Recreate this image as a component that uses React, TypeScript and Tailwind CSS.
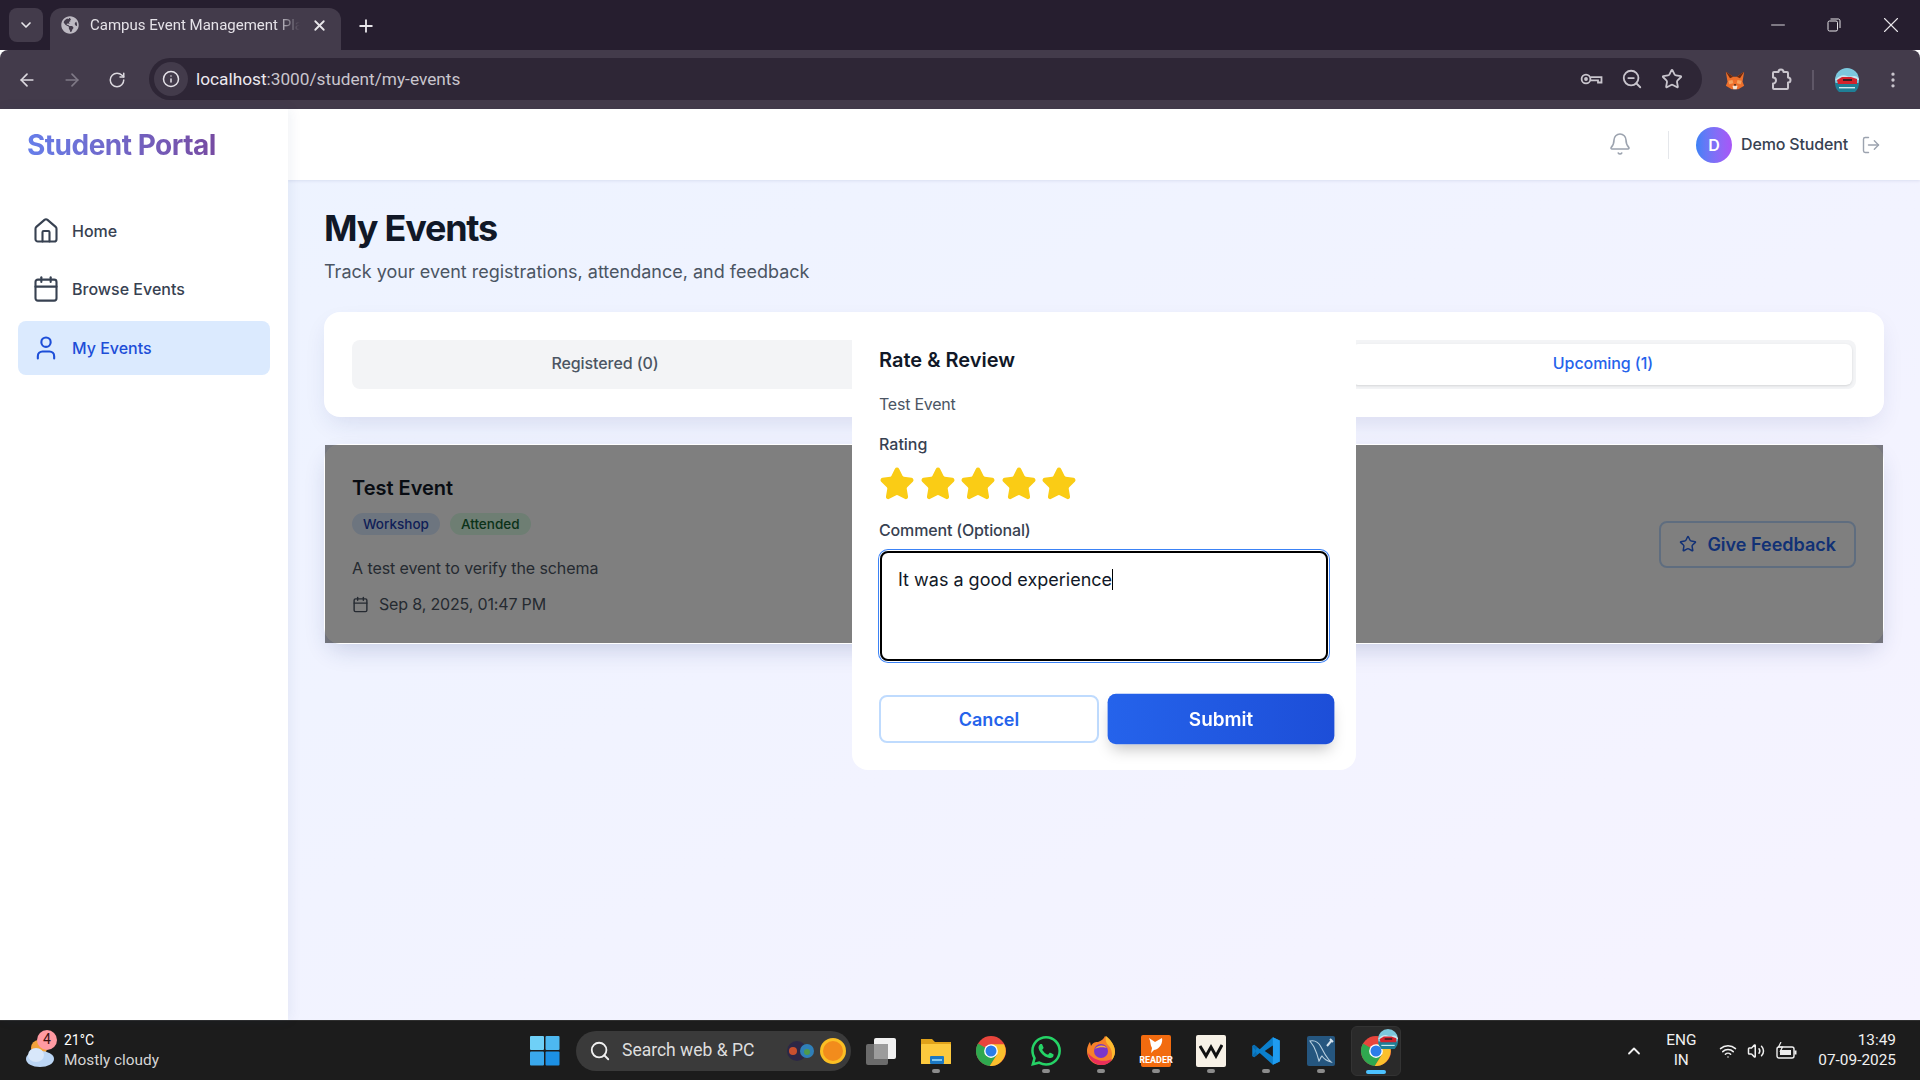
import React from "react";
import { ArrowLeft, ArrowRight, RotateCw, Info, ZoomOut, Star, EllipsisVertical, ChevronDown, Plus, X, Minus, House, Calendar, User, Bell, LogOut, Search, ChevronUp, Wifi, Volume2 } from "lucide-react";
import { FaGlobeAmericas } from "react-icons/fa";
import { SiWhatsapp } from "react-icons/si";

const segoe = "font-['Roboto','Noto_Sans',sans-serif]";

function KeyIcon() {
  return (
    <svg width="24" height="24" viewBox="0 0 24 24" fill="none" stroke="#c9c5cd" strokeWidth="1.8">
      <circle cx="7" cy="12" r="4.4" />
      <circle cx="7" cy="12" r="1" fill="#c9c5cd" />
      <path d="M11.4 10.2H22.5V15.5H19V13.4H11.2" />
    </svg>
  );
}

function PuzzleIcon() {
  return (
    <svg width="24" height="24" viewBox="0 0 24 24" fill="none" stroke="#c9c5cd" strokeWidth="2" strokeLinejoin="round">
      <path d="M5 4H9.5A2.5 2.5 0 0 1 14.5 4H18A1 1 0 0 1 19 5V9.5A2.5 2.5 0 0 1 19 14.5V20A1 1 0 0 1 18 21H5A1 1 0 0 1 4 20V15.5A3 3 0 0 0 4 9.5V5A1 1 0 0 1 5 4Z" />
    </svg>
  );
}

function Restore() {
  return (
    <svg width="14" height="14" viewBox="0 0 14 14" fill="none" stroke="#e8e6ea" strokeWidth="1">
      <rect x="1" y="3" width="9.5" height="10" rx="1.5" />
      <path d="M3.5 1H11.5A1.8 1.8 0 0 1 13 2.8V10" />
    </svg>
  );
}

function Fox() {
  return (
    <svg width="20" height="20" viewBox="0 0 24 24">
      <polygon points="1,2 10,8 14,8 23,2 21,14 23,19 16,23 8,23 1,19 3,14" fill="#ee6f2b" />
      <polygon points="1,2 10,8 6,10" fill="#6b2a10" />
      <polygon points="23,2 14,8 18,10" fill="#6b2a10" />
      <polygon points="4,13 9,12 10,16 5,17" fill="#f6a05c" />
      <polygon points="20,13 15,12 14,16 19,17" fill="#f6a05c" />
      <polygon points="9,19 15,19 14,23 10,23" fill="#f4e4d3" />
      <polygon points="10.5,17 13.5,17 12,19.5" fill="#2f2118" />
    </svg>
  );
}

function Avatar({ size }: { size: number }) {
  return (
    <svg width={size} height={size} viewBox="0 0 24 24">
      <circle cx="12" cy="12" r="12" fill="#7cc8dd" />
      <path d="M0 12C4 8 8 6 12 8S20 5 24 11V12H0Z" fill="#c6e6ee" />
      <path d="M0 15H24A12 12 0 0 1 0 15Z" fill="#1f7f96" />
      <path d="M2 12L7 9H16L22 11V16H3Z" fill="#d3222c" />
      <rect x="8" y="11" width="9" height="2" fill="#3a1d24" />
      <rect x="4" y="19" width="16" height="1.4" fill="#cde9ef" />
    </svg>
  );
}

function ChromeIcon({ size = 30 }: { size?: number }) {
  return (
    <svg width={size} height={size} viewBox="0 0 24 24">
      <circle cx="12" cy="12" r="12" fill="#e8453c" />
      <path d="M1.6 6A12 12 0 0 0 11 24L16.8 14.7L12 12Z" fill="#2fa84f" />
      <path d="M22.4 6.6A12 12 0 0 1 11 24L16.8 14.7L12 6.6Z" fill="#fbc02d" />
      <circle cx="12" cy="12" r="5.5" fill="#fff" />
      <circle cx="12" cy="12" r="4.4" fill="#2b7de9" />
    </svg>
  );
}

function TaskView() {
  return (
    <svg width="32" height="32" viewBox="0 0 32 32">
      <rect x="9" y="3" width="22" height="21" rx="2" fill="#f1f1f1" />
      <rect x="1" y="9" width="22" height="21" rx="2" fill="#6b6b6b" />
      <rect x="9" y="9" width="14" height="15" fill="#9c9c9c" />
    </svg>
  );
}

function Explorer() {
  return (
    <svg width="32" height="32" viewBox="0 0 32 32">
      <path d="M1 4H12L15 7H31V29H1Z" fill="#e0a21a" />
      <rect x="1" y="9" width="30" height="20" rx="1" fill="#fcc93e" />
      <rect x="10" y="21" width="14" height="8" rx="1" fill="#1b78c4" />
      <rect x="12" y="24" width="10" height="2" fill="#7fc7f2" />
    </svg>
  );
}

function Firefox() {
  return (
    <svg width="30" height="32" viewBox="0 0 30 32">
      <path d="M15 30C7 30 1 24 1 16C1 12 3 8 4 7L5 11C7 7 10 7 12 7C15 6 18 4 19 1C22 3 29 9 29 16C29 24 23 30 15 30Z" fill="#f7812a" />
      <path d="M20 1C24 4 29 10 29 17C29 20 27 24 25 26C27 20 26 14 22 10C20 8 19 4 20 1Z" fill="#fdbb2f" />
      <path d="M2 18C3 25 9 30 15 30C20 30 24 28 26 24C20 27 9 27 2 18Z" fill="#ea2f5a" />
      <circle cx="15" cy="16" r="7" fill="#7b37c9" />
      <path d="M9 14C11 10 18 9 21 13C18 12 12 12 9 14Z" fill="#fdae2e" />
    </svg>
  );
}

function VSCode() {
  return (
    <svg width="30" height="30" viewBox="0 0 24 24">
      <path d="M17.5 1L23 3.6V20.4L17.5 23L7 13.5L2.5 17L1 16V8L2.5 7L7 10.5Z" fill="#0b7fcc" />
      <path d="M17.5 1L23 3.6V20.4L17.5 23V16.5V7.5Z" fill="#1f9cf0" />
      <path d="M17.5 7.5L11 12L17.5 16.5Z" fill="#1c1c1c" />
      <path d="M1 8L2.5 7L5 9L3.5 12L5 15L2.5 17L1 16L4 12Z" fill="#0a6cb0" />
    </svg>
  );
}

function Workbench() {
  return (
    <svg width="28" height="30" viewBox="0 0 28 30">
      <rect width="28" height="30" rx="2" fill="#25567f" />
      <path d="M3 5C8 4 12 7 14 11C16 15 18 19 22 24L24 26C20 25 17 23 15 20C13 22 13 24 12 25C11 21 9 15 7 11C6 9 4 7 3 5Z" fill="none" stroke="#b8cfdf" strokeWidth="1.1" />
      <path d="M20 10L25 4M23 3L26 6" fill="none" stroke="#d4e2ec" strokeWidth="2" />
    </svg>
  );
}

function Dot() {
  return <span className="absolute bottom-[3px] left-1/2 -translate-x-1/2 w-[8px] h-[4px] rounded-full bg-[#8b8b8b]" />;
}

function TaskItem({ children, dot = true, active = false }: { children: React.ReactNode; dot?: boolean; active?: boolean }) {
  return (
    <div className={"relative w-[50px] h-[50px] mx-[2.5px] flex items-center justify-center rounded-md " + (active ? "bg-[#2a2a2a] border border-[#333]" : "")}>
      {children}
      {dot && !active && <Dot />}
      {active && <span className="absolute bottom-[1px] left-1/2 -translate-x-1/2 w-[20px] h-[4px] rounded-full bg-[#4cc2ff]" />}
    </div>
  );
}

function NavItem({ icon, label, active }: { icon: React.ReactNode; label: string; active?: boolean }) {
  return (
    <div className={"flex items-center h-[54px] px-[14px] gap-[12px] rounded-lg text-base font-medium " + (active ? "mt-px bg-[#dbeafe] text-[#1d4ed8]" : "text-[#374151]")}>
      {icon}
      <span className={active ? "mb-px" : ""}>{label}</span>
    </div>
  );
}

export default function App() {
  return (
    <div className="w-[1920px] h-[1080px] flex flex-col overflow-hidden font-['Inter',sans-serif] bg-white">
      {/* Browser tab strip */}
      <div className={"h-[50px] shrink-0 bg-[#261e2f] flex items-end relative " + segoe}>
        <div className="w-[34px] h-[34px] ml-[9px] mb-[8px] rounded-lg bg-[#433b4b] flex items-center justify-center text-[#e8e6ea]">
          <ChevronDown size={16} strokeWidth={2.5} />
        </div>
        <div className="ml-[7px] w-[291px] h-[42px] bg-[#433b4b] rounded-t-xl flex items-center pl-[11px] pr-[10px] pb-[8px]">
          <FaGlobeAmericas size={18} color="#bdb9c2" />
          <span className="ml-[11px] w-[210px] overflow-hidden whitespace-nowrap text-[15px] text-[#e5e2e8] [mask-image:linear-gradient(to_right,black_88%,transparent)]">Campus Event Management Platform</span>
          <X size={17} strokeWidth={2.5} color="#e8e6ea" className="ml-[11px]" />
        </div>
        <div className="ml-[15px] mb-[14px] text-[#e8e6ea]"><Plus size={20} strokeWidth={2.2} /></div>
        <div className="ml-auto self-start flex items-center h-[49px] text-[#e8e6ea]">
          <div className="w-[56px] flex justify-center"><Minus size={22} strokeWidth={1} /></div>
          <div className="w-[56px] flex justify-center"><Restore /></div>
          <div className="w-[58px] flex justify-center"><X size={26} strokeWidth={1} /></div>
        </div>
      </div>
      {/* Browser toolbar */}
      <div className={"h-[59px] shrink-0 bg-[#433b4b] rounded-t-lg flex items-center " + segoe}>
        <div className="w-[149px] shrink-0 flex items-center text-[#dcd9df]">
          <ArrowLeft size={20} className="ml-[17px]" />
          <ArrowRight size={20} className="ml-[25px] text-[#7f7986]" />
          <RotateCw size={18} className="ml-[26px]" />
        </div>
        <div className="w-[1553px] h-[42px] mb-[1px] rounded-full bg-[#2e2636] flex items-center pl-[5px] pr-[19px]">
          <div className="w-[34px] h-[34px] rounded-full bg-[#433b4b] flex items-center justify-center"><Info size={18} color="#e5e2e8" /></div>
          <span className="ml-[8px] pt-[2px] text-[17.25px] text-[#ece9ef]">localhost<span className="text-[#c9c5cd]">:3000/student/my-events</span></span>
          <div className="ml-auto flex items-center gap-[18px] text-[#c9c5cd]">
            <KeyIcon />
            <ZoomOut size={22} />
            <Star size={22} />
          </div>
        </div>
        <div className="flex-1 flex items-center">
          <div className="ml-[23px]"><Fox /></div>
          <div className="ml-[24px]"><PuzzleIcon /></div>
          <div className="ml-[19px] w-[2px] h-[20px] bg-[#5f5767]" />
          <div className="ml-[21px]"><Avatar size={24} /></div>
          <EllipsisVertical size={20} color="#c9c5cd" className="ml-[24px]" />
        </div>
      </div>

      {/* Page */}
      <div className="flex-1 min-h-0 flex">
        <aside className="w-[288px] shrink-0 bg-white shadow-[2px_0_12px_rgba(30,50,120,0.07)] z-10 px-[18px]">
          <div className="pt-[18px] pl-[9px] h-[94px]">
            <h1 className="text-[28px] leading-[36px] font-bold tracking-[-0.5px] bg-gradient-to-r from-[#667eea] to-[#764ba2] bg-clip-text text-transparent w-fit">Student Portal</h1>
          </div>
          <nav className="flex flex-col gap-[4px] mt-[1px]">
            <NavItem label="Home" icon={<House size={28} color="#374151" strokeWidth={1.8} />} />
            <NavItem label="Browse Events" icon={<Calendar size={28} color="#374151" strokeWidth={1.8} />} />
            <NavItem label="My Events" active icon={<User size={28} color="#1d4ed8" strokeWidth={1.8} />} />
          </nav>
        </aside>
        <div className="flex-1 min-w-0 flex flex-col bg-gradient-to-br from-[#edf3ff] to-[#f6f3ff]">
          <header className="h-[71px] shrink-0 bg-white shadow-[0_1px_3px_rgba(30,50,120,0.1)] flex items-center justify-end pr-[39px]">
            <Bell size={24} color="#9ca3af" strokeWidth={1.6} className="mb-[2px]" />
            <div className="w-px h-[28px] bg-[#e5e7eb] ml-[36px] mr-[27px]" />
            <div className="w-[36px] h-[36px] rounded-full bg-gradient-to-r from-[#3b82f6] to-[#a855f7] text-white font-semibold flex items-center justify-center text-base">D</div>
            <span className="ml-[9px] mb-[2px] text-base tracking-[-0.01em] font-medium text-[#374151]">Demo Student</span>
            <LogOut size={20} color="#9ca3af" strokeWidth={1.7} className="ml-[13px]" />
          </header>
          <main className="relative flex-1 min-h-0 px-[36px] pt-[28px]">
            <h2 className="text-[36px] leading-[40px] font-bold tracking-[-1.2px] text-[#111827]">My Events</h2>
            <p className="mt-[10px] text-[18px] leading-[28px] text-[#4b5563]">Track your event registrations, attendance, and feedback</p>

            <div className="mt-[26px] bg-white rounded-2xl p-7 shadow-[0_10px_25px_-5px_rgba(30,50,120,0.12)]">
              <div className="flex h-[49px] p-1 bg-[#f3f4f6] rounded-lg text-base font-medium tracking-[-0.005em]">
                <div className="flex-1 flex items-center justify-center pb-[3px] text-[#4b5563]">Registered (0)</div>
                <div className="flex-1 flex items-center justify-center pb-[3px] text-[#4b5563]">Attended (1)</div>
                <div className="flex-1 flex items-center justify-center pb-[3px] pl-[2px] rounded-md bg-white shadow-sm text-[#2563eb]">Upcoming (1)</div>
              </div>
            </div>

            <div className="relative mt-[27px] bg-white rounded-2xl border border-white pl-[27px] pr-[27px] pt-[29px] pb-[27px] flex items-center justify-between shadow-[0_10px_25px_-5px_rgba(30,50,120,0.2)]">
              <div>
                <h3 className="text-[20px] leading-[28px] font-semibold text-[#111827]">Test Event</h3>
                <div className="flex gap-[10px] mt-[11px]">
                  <span className="px-[11px] h-[22px] rounded-full bg-[#dbeafe] text-[#1e40af] text-[13.5px] font-medium flex items-center">Workshop</span>
                  <span className="px-[11px] h-[22px] rounded-full bg-[#dcfce7] text-[#166534] text-[13.5px] font-medium flex items-center">Attended</span>
                </div>
                <p className="mt-[21px] text-base leading-[24px] tracking-[-0.005em] text-[#4b5563]">A test event to verify the schema</p>
                <div className="mt-[12px] flex items-center gap-[10px] text-base leading-[24px] tracking-[-0.01em] text-[#4b5563]">
                  <Calendar size={17} />
                  <span>Sep 8, 2025, 01:47 PM</span>
                </div>
              </div>
              <div className="mb-[2px] flex items-center h-[47px] px-[18px] gap-[10px] rounded-lg border-2 border-[#bfdbfe] text-[#2563eb] text-[18px] font-semibold">
                <Star size={18} />
                <span>Give Feedback</span>
              </div>
              <div className="absolute inset-0 bg-black/50" />
            </div>

            {/* Dialog */}
            <div className="absolute top-[138px] left-1/2 -translate-x-1/2 w-[504px] h-[452px] bg-white rounded-2xl pt-7 pl-[27px] pr-[27px]">
              <h3 className="text-[20px] leading-[28px] font-semibold text-[#111827]">Rate &amp; Review</h3>
              <p className="mt-[18px] text-base leading-[24px] tracking-[-0.015em] text-[#4b5563]">Test Event</p>
              <p className="mt-[16px] text-base leading-[24px] font-medium text-[#374151]">Rating</p>
              <div className="mt-[10px] flex gap-[4.5px]">
                {[0, 1, 2, 3, 4].map((i) => (
                  <Star key={i} size={36} fill="#facc15" color="#facc15" />
                ))}
              </div>
              <p className="mt-[16px] text-base leading-[24px] tracking-[-0.01em] font-medium text-[#374151]">Comment (Optional)</p>
              <div className="mt-[9px] mx-px h-[110px] rounded-lg border-2 border-black shadow-[0_0_0_1px_#fff,0_0_0_2px_#3b82f6] pl-4 pr-4 pt-[13px] text-[18px] leading-[28px] text-[#111827]">
                It was a good experience<span className="inline-block w-px h-[21px] bg-black align-[-4px]" />
              </div>
              <div className="mt-[34px] flex gap-[14px]">
                <div className="flex-1 h-[48px] rounded-lg border-2 border-[#bfdbfe] text-[#2563eb] text-[18px] font-semibold flex items-center justify-center">Cancel</div>
                <div className="flex-1 h-[48px] rounded-lg bg-gradient-to-r from-[#2563eb] to-[#1d4ed8] text-white text-[18px] font-semibold flex items-center justify-center scale-105 shadow-[0_8px_14px_-4px_rgba(0,0,0,0.25)]">Submit</div>
              </div>
            </div>
          </main>
        </div>
      </div>

      {/* Taskbar */}
      <div className={"h-[60px] shrink-0 bg-[#1c1c1c] border-t border-[#2f2f2f] flex items-center text-white " + segoe}>
        <div className="w-[530px] shrink-0 flex items-center pl-[23px]">
          <div className="relative w-[34px] h-[36px]">
            <svg width="34" height="36" viewBox="0 0 34 36">
              <circle cx="16" cy="15" r="8" fill="#f2a23a" />
              <ellipse cx="17" cy="26" rx="14" ry="8" fill="#bcd6f5" />
              <ellipse cx="13" cy="22" rx="8" ry="7" fill="#d8e7fa" />
            </svg>
            <span className="absolute -top-[3px] left-[14px] w-[20px] h-[20px] rounded-full bg-[#ff9aa2] text-[#3a1010] text-[14px] flex items-center justify-center">4</span>
          </div>
          <div className="ml-[7px] mb-[2px] text-[14px] leading-[20px]">
            <div>21°C</div>
            <div className="text-[#d5d5d5] text-[15.4px]">Mostly cloudy</div>
          </div>
        </div>
        <svg width="30" height="30" viewBox="0 0 30 30" className="shrink-0">
          <rect x="0" y="0" width="14" height="14" rx="1" fill="#6fd0f7" />
          <rect x="15.5" y="0" width="14" height="14" rx="1" fill="#4db8f0" />
          <rect x="0" y="15.5" width="14" height="14" rx="1" fill="#3aa8ec" />
          <rect x="15.5" y="15.5" width="14" height="14" rx="1" fill="#1c90e4" />
        </svg>
        <div className="ml-[16px] w-[275px] h-[40px] rounded-full bg-[#3a3a3a] flex items-center pl-[13px] pr-[2px] shrink-0">
          <Search size={22} color="#f0f0f0" />
          <span className="ml-[11px] text-[17.5px] text-[#dedede]">Search web &amp; PC</span>
          <svg width="66" height="32" viewBox="0 0 66 32" className="ml-auto">
            <circle cx="14" cy="16" r="10" fill="#2c2746" />
            <circle cx="10" cy="16" r="4" fill="#c9502e" />
            <circle cx="24" cy="16" r="7" fill="#2f7fb8" />
            <circle cx="24" cy="17" r="3" fill="#4f9a4b" />
            <circle cx="50" cy="16" r="13" fill="#fbbf24" />
            <circle cx="50" cy="16" r="10" fill="#f28c1c" />
          </svg>
        </div>
        <div className="ml-[2.5px] flex items-center shrink-0">
          <TaskItem dot={false}><TaskView /></TaskItem>
          <TaskItem><Explorer /></TaskItem>
          <TaskItem dot={false}><ChromeIcon /></TaskItem>
          <TaskItem><SiWhatsapp size={30} color="#25d366" /></TaskItem>
          <TaskItem><Firefox /></TaskItem>
          <TaskItem>
            <div className="w-[30px] h-[32px] bg-[#f26b0f] rounded-[2px] flex flex-col items-center justify-end pb-[2px]">
              <svg width="20" height="18" viewBox="0 0 20 18"><path d="M3 1L9 5L16 1C17 6 14 12 8 13L5 16L6 11C4 8 5 5 3 1Z" fill="#fff" /></svg>
              <span className="text-[9px] leading-[10px] font-bold text-white">READER</span>
            </div>
          </TaskItem>
          <TaskItem>
            <div className="w-[30px] h-[32px] bg-[#f7f1e6] rounded-[2px] flex items-center justify-center">
              <svg width="24" height="16" viewBox="0 0 24 16"><path d="M1 3L7 13L12 4L17 13L23 2" fill="none" stroke="#111" strokeWidth="3" /></svg>
            </div>
          </TaskItem>
          <TaskItem><VSCode /></TaskItem>
          <TaskItem><Workbench /></TaskItem>
          <TaskItem active>
            <div className="relative">
              <ChromeIcon />
              <div className="absolute -top-[7px] -right-[7px]"><Avatar size={20} /></div>
            </div>
          </TaskItem>
        </div>
        <div className="ml-auto flex items-center pr-[24px] text-[#f0f0f0]">
          <ChevronUp size={20} strokeWidth={2.2} />
          <div className="ml-[12px] w-[50px] mb-[2px] text-center text-[15.4px] leading-[20px]">
            <div>ENG</div>
            <div>IN</div>
          </div>
          <Wifi size={18} className="ml-[13px]" />
          <Volume2 size={18} className="ml-[10px]" />
          <svg width="22" height="18" viewBox="0 0 22 18" className="ml-[11px]" fill="none" stroke="#f0f0f0" strokeWidth="1.4">
            <rect x="1" y="5" width="17" height="11" rx="2" />
            <rect x="4" y="8" width="11" height="5" fill="#f0f0f0" stroke="none" />
            <path d="M19.5 8.5V12.5" strokeWidth="2" />
            <path d="M5 0L2.5 5H6.5L4 10" strokeWidth="1.2" />
          </svg>
          <div className="ml-[20px] mb-[2px] text-right text-[15.4px] leading-[20px]">
            <div>13:49</div>
            <div>07-09-2025</div>
          </div>
        </div>
      </div>
    </div>
  );
}
